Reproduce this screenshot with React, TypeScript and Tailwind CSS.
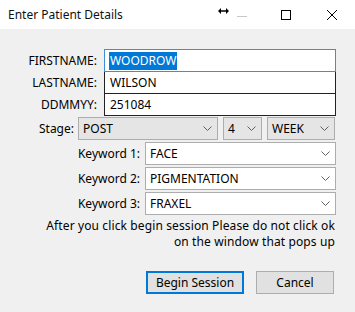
const font = { fontFamily: '"Noto Sans", "Open Sans", sans-serif' };

function Chevron() {
  return (
    <svg width="9" height="6" viewBox="0 0 9 6" className="shrink-0">
      <path d="M0.5 0.5 L4.5 4.5 L8.5 0.5" fill="none" stroke="#606060" strokeWidth="1" />
    </svg>
  );
}

function Combo({ value, className, gray }: { value: string; className: string; gray?: boolean }) {
  return (
    <div
      className={
        "h-[23px] flex items-center justify-between pl-[4px] pr-[5px] border border-[#adadad] " +
        (gray ? "bg-[#e5e5e5] " : "bg-white ") +
        className
      }
    >
      <span>{value}</span>
      <Chevron />
    </div>
  );
}

export default function App() {
  const boxes = [
    { label: "FIRSTNAME:", value: "WOODROW", active: true },
    { label: "LASTNAME:", value: "WILSON" },
    { label: "DDMMYY:", value: "251084" },
  ];
  const keywords = [
    ["Keyword 1:", "FACE"],
    ["Keyword 2:", "PIGMENTATION"],
    ["Keyword 3:", "FRAXEL"],
  ];

  return (
    <div className="w-[355px] h-[312px] bg-[#f0f0f0] text-[12px] text-black flex flex-col" style={font}>
      {/* title bar */}
      <div className="h-[29px] bg-white flex items-center pl-[8px] shrink-0">
        <span className="text-[12px] text-[#111]">Enter Patient Details</span>
        <div className="ml-auto flex items-center h-full">
          <svg width="11" height="6" viewBox="0 0 11 6" className="-mt-[7px] mr-[8px]">
            <path d="M0 3 L3 0 L3 6 Z M11 3 L8 0 L8 6 Z" fill="#000" />
            <path d="M2 3 H9" stroke="#000" strokeWidth="1.5" />
          </svg>
          <div className="w-[10px] h-px bg-[#c8c8c8] mt-[4px] mr-[34px]" />
          <div className="w-[10px] h-[10px] border border-black mr-[36px]" />
          <svg width="10" height="10" viewBox="0 0 10 10" className="mr-[18px]">
            <path d="M0 0 L10 10 M10 0 L0 10" stroke="#000" strokeWidth="1" />
          </svg>
        </div>
      </div>

      <div className="flex flex-col pt-[20px]">
        {boxes.map((b, i) => (
          <div key={b.label} className={"flex items-center " + (i > 0 ? "-mt-px" : "")}>
            <div className="w-[98px] text-right pr-[1px]">{b.label}</div>
            <div
              className={
                "ml-[6px] w-[232px] h-[23px] bg-white border flex items-center pl-[4px] relative " +
                (b.active ? "border-[#3d8fd6] z-10" : "border-[#222]")
              }
            >
              {b.active ? (
                <span className="bg-[#0078d7] text-white leading-[18px] px-px">{b.value}</span>
              ) : (
                <span className="px-px">{b.value}</span>
              )}
            </div>
          </div>
        ))}

        <div className="flex items-center mt-[1px]">
          <div className="w-[74px] text-right">Stage:</div>
          <Combo value="POST" gray className="ml-[4px] w-[140px]" />
          <Combo value="4" gray className="ml-[5px] w-[39px]" />
          <Combo value="WEEK" gray className="ml-[5px] w-[68px]" />
        </div>

        <div className="flex flex-col gap-[2px] mt-[2px]">
          {keywords.map(([l, v]) => (
            <div key={l} className="flex items-center">
              <div className="w-[140px] text-right">{l}</div>
              <Combo value={v} className="ml-[5px] w-[191px]" />
            </div>
          ))}
        </div>

        <div className="pr-[20px] text-right leading-[16px] mt-[3px] tracking-[0.12px]">
          After you click begin session Please do not click ok
          <br />
          on the window that pops up
        </div>

        <div className="flex justify-end gap-[12px] pr-[21px] mt-[21px]">
          <button className="w-[98px] h-[23px] bg-[#e1e1e1] border-2 border-[#0078d7]">Begin Session</button>
          <button className="w-[78px] h-[23px] bg-[#e1e1e1] border border-[#adadad]">Cancel</button>
        </div>
      </div>
    </div>
  );
}
